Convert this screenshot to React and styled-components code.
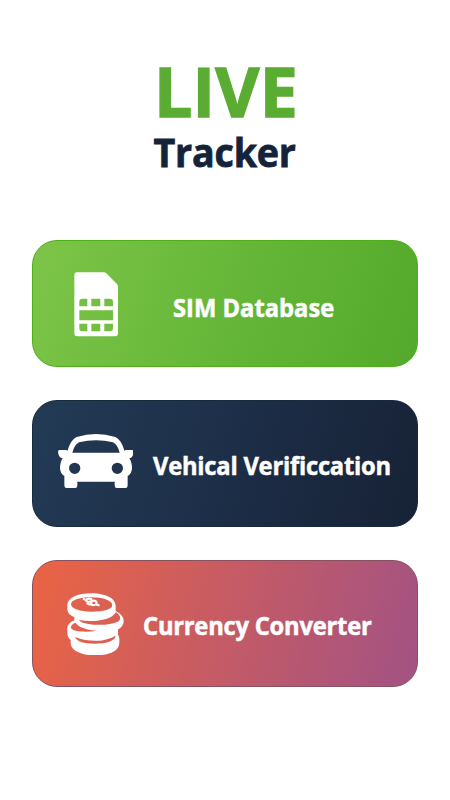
import styled, { createGlobalStyle } from 'styled-components'

const GlobalStyle = createGlobalStyle`
	* {
		box-sizing: border-box;
	}

	body {
		margin: 0;
		background: #fff;
		font-family: 'Open Sans', 'Noto Sans', sans-serif;
		font-weight: 700;
	}
`

const Screen = styled.main`
	display: flex;
	flex-direction: column;
	align-items: center;
	width: 450px;
	height: 800px;
	padding-top: 55px;
	overflow: hidden;
	background: #fff;
`

const Header = styled.header`
	display: flex;
	flex-direction: column;
	align-items: center;
	height: 185px;
`

const Title = styled.h1`
	margin: 0;
	padding-left: 2px;
	color: #5aad32;
	font-size: 68px;
	line-height: 71px;
	letter-spacing: 0.2px;
	-webkit-text-stroke: 1.4px #5aad32;
	white-space: nowrap;
`

const Subtitle = styled.h2`
	margin: 0;
	padding-top: 3px;
	color: #15233a;
	font-size: 40px;
	line-height: 46px;
	letter-spacing: -0.2px;
	-webkit-text-stroke: 0.8px #15233a;
	transform: scaleX(0.94);
	white-space: nowrap;
`

const Menu = styled.nav`
	display: flex;
	flex-direction: column;
	gap: 33px;
`

const Card = styled.button`
	display: grid;
	grid-template-columns: ${(props) => props.$labelStart}px 1fr;
	align-items: center;
	width: 386px;
	height: 127px;
	padding: 0;
	border: 1px solid ${(props) => props.$border};
	border-radius: 25px;
	background: ${(props) => props.$background};
	background-origin: border-box;
	color: #fff;
	font: inherit;
	text-align: left;
`

const IconSlot = styled.span`
	display: flex;
	padding-left: ${(props) => props.$left}px;
	margin-top: ${(props) => props.$drop}px;
`

const Label = styled.span`
	padding-top: ${(props) => props.$drop}px;
	font-size: 25px;
	line-height: 34px;
	letter-spacing: ${(props) => props.$spacing}px;
	-webkit-text-stroke: 0.5px #fff;
	transform: scaleX(0.95);
	transform-origin: left;
	white-space: nowrap;
`

const SimIcon = () => (
	<svg width="44.3" height="64.7" viewBox="41 35 133 194">
		<path
			fill="#fff"
			fillRule="evenodd"
			d="M50 36H131Q135 36 138 39L170 71Q173 74 173 78V219Q173 228 164 228H51Q42 228 42 219V45Q42 36 50 36Z
			M57 138V124Q57 115 66 115H81V138Z M93 115H120V138H93Z M132 115H149Q158 115 158 124V138H132Z
			M57 150H158V180H57Z
			M57 190H81V213H66Q57 213 57 204Z M93 190H120V213H93Z M132 190H158V204Q158 213 149 213H132Z"
		/>
	</svg>
)

const CarIcon = () => (
	<svg width="75.7" height="54.3" viewBox="23 26 227 163">
		<path
			fill="#fff"
			fillRule="evenodd"
			d="M52 76C57 57 65 42 79 35Q137 17 195 35C209 42 217 57 222 76L226 74H246Q250 74 250 79C249 91 245 98 237 99Q245 110 245 128Q245 143 232 153V180Q232 189 223 189H202Q193 189 193 180V169H81V180Q81 189 72 189H51Q42 189 42 180V153Q29 143 29 128Q29 110 37 99C28 98 24 91 23 79Q23 74 27 74H48Z
			M66 82H208Q201 57 188 51Q137 39 86 51Q73 57 66 82Z
			M56 129A17 17 0 1 0 90 129A17 17 0 1 0 56 129Z
			M184 129A17 17 0 1 0 218 129A17 17 0 1 0 184 129Z"
		/>
	</svg>
)

const CoinsIcon = () => (
	<svg width="57" height="62.7" viewBox="21 23 171 188">
		<path
			fill="#fff"
			fillRule="evenodd"
			d="M22 59C22 38 52 24 94 24C136 24 167 39 167 62V78C181 84 191 94 191 106C191 118 184 127 174 132V148Q178 152 178 161V173C178 197 148 210 106 210C64 210 32 196 32 173V164C25 158 22 151 22 142V129C22 119 30 111 43 105V96C29 90 22 81 22 72Z
			M33 57C33 70 60 79 94 79C130 79 157 72 157 60C157 46 130 36 94 36C60 36 33 44 33 57Z
			M168 81C180 89 184 98 177 106C165 117 117 122 85 116C70 114 60 109 57 104C98 112 153 106 168 81Z
			M46 112C56 127 82 134 112 136C79 142 37 139 33 128C32 121 38 115 46 112Z
			M45 155C77 168 119 170 143 161C153 158 162 154 167 151C166 165 143 175 104 175C71 175 49 168 45 155Z"
		/>
		<path
			fill="none"
			stroke="#fff"
			strokeWidth="6.5"
			strokeLinecap="round"
			d="M71 41L80 45M116 60L107 57M94 41C84 38 75 42 80 48C86 54 98 42 106 47C115 52 108 61 95 59M82 54C87 60 96 56 94 50"
		/>
	</svg>
)

const items = [
	{
		name: 'SIM Database',
		icon: <SimIcon />,
		iconLeft: 40.5,
		iconDrop: 1.5,
		labelStart: 140,
		labelDrop: 7,
		spacing: 0,
		border: '#4db014',
		background: 'linear-gradient(108deg, #7dc548 0%, #66b739 50%, #53a92b 100%)',
	},
	{
		name: 'Vehical Verificcation',
		icon: <CarIcon />,
		iconLeft: 24.7,
		iconDrop: -5,
		labelStart: 120,
		labelDrop: 2,
		spacing: -0.25,
		border: '#172b3d',
		background: 'linear-gradient(108deg, #233b55 0%, #1d2e48 50%, #172235 100%)',
	},
	{
		name: 'Currency Converter',
		icon: <CoinsIcon />,
		iconLeft: 34,
		iconDrop: 1,
		labelStart: 109.5,
		labelDrop: 2,
		spacing: -0.25,
		border: '#895060',
		background: 'linear-gradient(105deg, #eb6443 0%, #c55b65 50%, #a25284 100%)',
	},
]

export default function App() {
	return (
		<>
			<GlobalStyle />
			<Screen>
				<Header>
					<Title>LIVE</Title>
					<Subtitle>Tracker</Subtitle>
				</Header>
				<Menu>
					{items.map((item) => (
						<Card key={item.name} $labelStart={item.labelStart} $border={item.border} $background={item.background}>
							<IconSlot $left={item.iconLeft} $drop={item.iconDrop}>
								{item.icon}
							</IconSlot>
							<Label $drop={item.labelDrop} $spacing={item.spacing}>
								{item.name}
							</Label>
						</Card>
					))}
				</Menu>
			</Screen>
		</>
	)
}
